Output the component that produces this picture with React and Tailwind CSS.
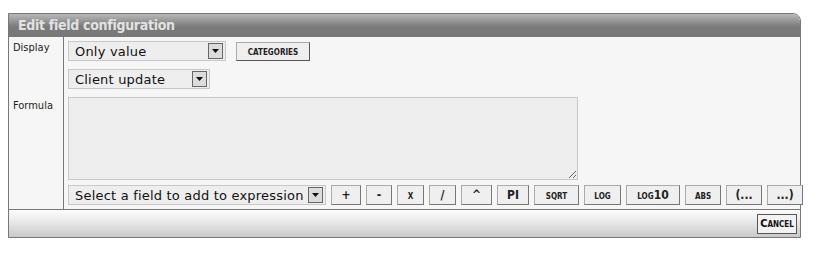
import React from "react";

const Arrow = () => (
  <span className="flex h-[16px] w-[15px] items-center justify-center border border-[#666] bg-[#dcdcdc]">
    <svg width="7" height="4" viewBox="0 0 7 4">
      <path d="M0 0h7L3.5 4z" fill="#111" />
    </svg>
  </span>
);

const Select = ({ text, width }) => (
  <div
    className={`flex h-[20px] items-center justify-between border border-[#c8c8c8] bg-[#eeeeee] pl-[6px] pr-[2px] ${width}`}
  >
    <span className="text-[13px] leading-none tracking-[0.2px] text-[#111] font-stretch-normal">{text}</span>
    <Arrow />
  </div>
);

const Btn = ({ children, width }) => (
  <button
    className={`flex h-[20px] items-center justify-center border border-[#aaa] border-r-[#777] border-b-[#777] bg-[#efefef] text-[12px] font-bold leading-none text-[#222] [font-variant:small-caps] ${width}`}
  >
    {children}
  </button>
);

const tools = [
  ["+", "w-[30px]"],
  ["-", "w-[26px]"],
  ["x", "w-[27px]"],
  ["/", "w-[27px]"],
  ["^", "w-[31px]"],
  ["PI", "w-[32px]"],
  ["sqrt", "w-[45px]"],
  ["log", "w-[37px]"],
  ["log10", "w-[54px]"],
  ["abs", "w-[36px]"],
  ["(...", "w-[36px]"],
  ["...)", "w-[36px]"],
];

export default function App() {
  return (
    <div className="bg-white pl-[8px] pt-[13px] font-['DejaVu_Sans',sans-serif] font-stretch-condensed">
      <div className="w-[793px] rounded-tr-[8px] border border-[#777] bg-[#f6f6f6]">
        <div className="flex h-[23px] items-center rounded-tr-[7px] bg-[linear-gradient(#b9b9b9,#7a7a7a_55%,#787878)] pl-[9px]">
          <span className="text-[14px] font-bold tracking-[-0.3px] text-[#e2e2e2]">Edit field configuration</span>
        </div>

        <div className="grid grid-cols-[55px_1fr]">
          <div className="border-r border-[#777] pl-[4px] pt-[3px] text-[11px] text-[#222]">Display</div>
          <div className="flex flex-col gap-[8px] pb-[8px] pl-[4px] pt-[4px]">
            <div className="flex items-center gap-[10px]">
              <Select text="Only value" width="w-[158px]" />
              <button className="flex h-[19px] w-[74px] items-center justify-center border border-[#aaa] border-r-[#555] border-b-[#555] bg-[#efefef] text-[11px] font-bold leading-none text-[#222] [font-variant:small-caps]">
                categories
              </button>
            </div>
            <Select text="Client update" width="w-[142px]" />
          </div>

          <div className="border-r border-[#777] pl-[4px] pt-[1px] text-[11px] text-[#222]">Formula</div>
          <div className="flex flex-col gap-[5px] pb-[4px] pl-[4px]">
            <textarea className="h-[83px] w-[510px] resize-y border border-[#c8c8c8] bg-[#eeeeee] outline-none" />
            <div className="flex items-center gap-[5px]">
              <Select text="Select a field to add to expression" width="w-[258px]" />
              {tools.map(([t, w]) => (
                <Btn key={t} width={w}>
                  {t}
                </Btn>
              ))}
            </div>
          </div>
        </div>

        <div className="flex h-[28px] items-center justify-end border-t border-[#777] bg-[linear-gradient(#fbfbfb,#f0f0f0_30%,#c9c9c9)] pr-[3px]">
          <button className="flex h-[20px] w-[40px] items-center justify-center border border-[#555] bg-[#f2f2f2] text-[11px] font-bold leading-none text-[#111] [font-variant:small-caps]">
            Cancel
          </button>
        </div>
      </div>
    </div>
  );
}
